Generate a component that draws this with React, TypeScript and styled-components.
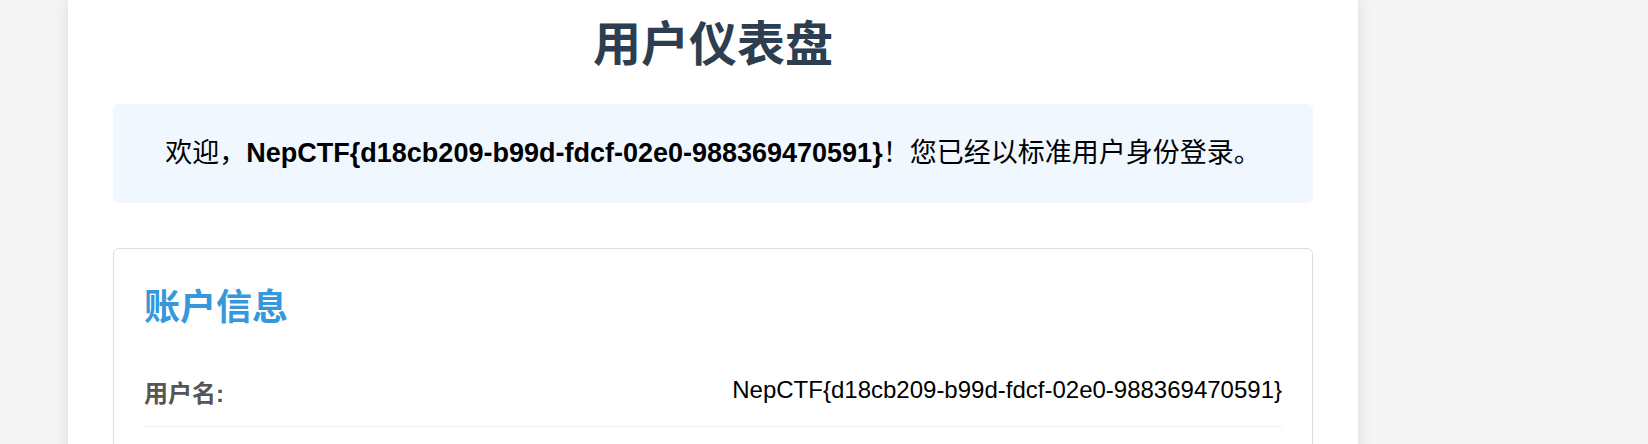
import React from "react";
import styled, { createGlobalStyle } from "styled-components";

const GlobalStyle = createGlobalStyle`
  html, body {
    margin: 0;
    padding: 0;
    background: #f4f4f4;
    overflow: hidden;
  }
  body {
    font-family: "Liberation Sans", Arial, "Noto Sans CJK SC", sans-serif;
    color: #000;
  }
`;

const Page = styled.div`
  padding-left: 68px;
  height: 444px;
`;

const Container = styled.main`
  box-sizing: border-box;
  width: 1290px;
  min-height: 520px;
  padding: 16px 45px 45px;
  background: #fff;
  box-shadow: 0 0 15px rgba(0, 0, 0, 0.1);
`;

const Title = styled.h1`
  margin: 0 0 30px;
  font-size: 48px;
  line-height: 58px;
  font-weight: 700;
  text-align: center;
  color: #2c3e50;
`;

const Welcome = styled.section`
  padding: 30px;
  margin-bottom: 45px;
  background: #f0f7ff;
  border-radius: 6px;
  font-size: 27px;
  line-height: 39px;
  text-align: center;
  color: #000;
`;

const Card = styled.section`
  border: 1px solid #ddd;
  border-radius: 6px;
  padding: 30px 30px 60px;
`;

const CardTitle = styled.h2`
  margin: 0 0 22px;
  font-size: 36px;
  line-height: 58px;
  font-weight: 700;
  color: #3498db;
`;

const InfoRow = styled.div`
  display: flex;
  justify-content: space-between;
  align-items: baseline;
  padding: 13px 0 18px;
  border-bottom: 1px solid #eee;
  font-size: 24px;
  line-height: 36px;
`;

const Label = styled.span`
  font-weight: 700;
  color: #555;
  position: relative;
  top: 4px;
`;

const Value = styled.span`
  color: #000;
`;

const flag = "NepCTF{d18cb209-b99d-fdcf-02e0-988369470591}";

export default function App() {
  return (
    <>
      <GlobalStyle />
      <Page>
        <Container>
          <Title>用户仪表盘</Title>
          <Welcome>
            欢迎，<strong>{flag}</strong>！您已经以标准用户身份登录。
          </Welcome>
          <Card>
            <CardTitle>账户信息</CardTitle>
            <InfoRow>
              <Label>用户名:</Label>
              <Value>{flag}</Value>
            </InfoRow>
          </Card>
        </Container>
      </Page>
    </>
  );
}
